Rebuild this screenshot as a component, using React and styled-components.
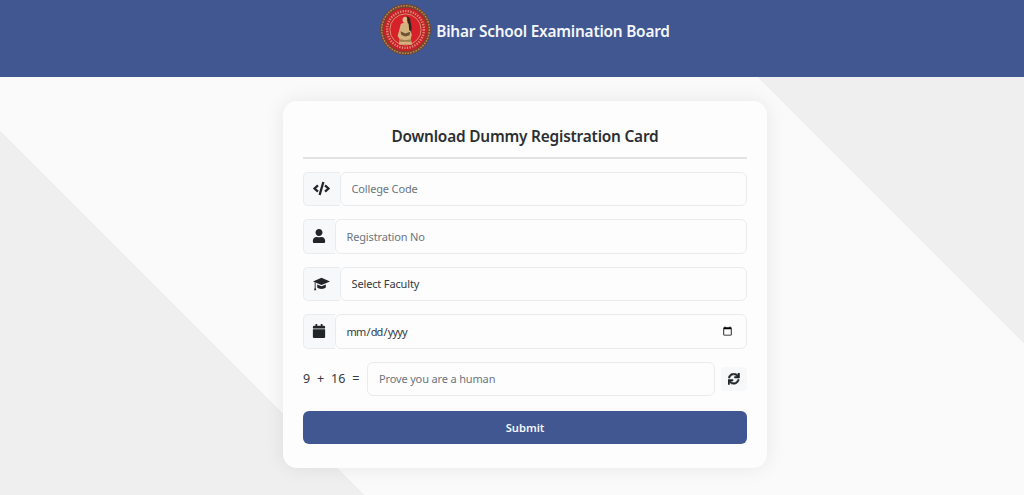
import styled, { createGlobalStyle } from "styled-components";
import { FaCode, FaUser, FaCalendar, FaSync } from "react-icons/fa";

const GlobalStyle = createGlobalStyle`
  * { box-sizing: border-box; }
  body {
    margin: 0;
    font-family: "Noto Sans", "Open Sans", sans-serif;
    color: #212529;
    background: #fafafa;
  }
  input::placeholder { color: #6c757d; opacity: 1; }
`;

const Header = styled.header`
  height: 77px;
  background: #405791;
  display: flex;
  justify-content: center;
  padding: 4px 0 0 26px;
  gap: 5px;
`;

const LogoMark = styled.svg`
  width: 51px;
  height: 51px;
  flex: none;
`;

const BoardName = styled.h1`
  margin: 0;
  height: 51px;
  line-height: 56px;
  font-size: 15.4px;
  font-weight: 600;
  letter-spacing: -0.22px;
  color: #f4f6fb;
`;

const Main = styled.main`
  height: 418px;
  padding: 24px 0 0 26px;
  display: flex;
  justify-content: center;
  background: linear-gradient(45deg, #efefef 258px, #fafafa 258px, #fafafa 831px, #efefef 831px);
`;

const Card = styled.form`
  width: 484px;
  height: 367px;
  padding: 20px;
  background: #fdfdfd;
  border-radius: 14px;
  box-shadow: 0 0 20px rgba(0, 0, 0, 0.08);
`;

const CardTitle = styled.h2`
  margin: 0 0 12.5px;
  height: 38px;
  line-height: 31px;
  text-align: center;
  font-size: 15.4px;
  font-weight: 600;
  letter-spacing: -0.2px;
  color: #2b2f33;
  border-bottom: 2px solid #e2e3e5;
`;

const Row = styled.div`
  display: flex;
  height: 34.5px;
  margin-bottom: 13px;
`;

const Addon = styled.span`
  flex: none;
  width: ${(p) => p.$width}px;
  display: flex;
  align-items: center;
  justify-content: center;
  background: #f7f8fa;
  border: 1px solid #e9ecef;
  border-right: none;
  border-radius: 5px 0 0 5px;
  font-size: ${(p) => p.$size || 15}px;
  color: #212529;
`;

const fieldStyles = `
  flex: 1;
  min-width: 0;
  height: 100%;
  padding: 0 11px;
  font-family: inherit;
  font-size: 11px;
  letter-spacing: -0.15px;
  color: #343a40;
  background: #fdfdfd;
  border: 1px solid #e9ecef;
  border-radius: 6px;
  outline: none;
`;

const Field = styled.input`
  ${fieldStyles}
`;

const DateField = styled.input`
  ${fieldStyles}
  &::-webkit-datetime-edit { letter-spacing: -0.85px; margin-left: -1px; }
`;

const Picker = styled.select`
  ${fieldStyles}
  appearance: none;
`;

const Sum = styled.span`
  flex: none;
  width: 64px;
  display: flex;
  align-items: center;
  font-size: 12.5px;
  word-spacing: 0.2px;
  color: #343a40;
  white-space: pre;
`;

const Refresh = styled.button`
  flex: none;
  align-self: center;
  width: 26px;
  height: 24px;
  margin-left: 6px;
  padding: 0;
  display: flex;
  align-items: center;
  justify-content: center;
  background: #f7f8fa;
  border: none;
  border-radius: 4px;
  font-size: 11.5px;
  color: #212529;

  svg { stroke: currentColor; stroke-width: 24; }
`;

const Submit = styled.button`
  display: block;
  width: 100%;
  height: 33px;
  margin-top: 15px;
  font-family: inherit;
  font-size: 11.2px;
  font-weight: 600;
  color: #f4f6fb;
  background: #405791;
  border: none;
  border-radius: 6px;
`;

function Logo() {
  return (
    <LogoMark viewBox="0 0 51 51">
      <circle cx="25.5" cy="25.5" r="25.5" fill="#74452c" />
      <circle cx="25.5" cy="25.5" r="23.8" fill="none" stroke="#b98a54" strokeWidth="1.5" strokeDasharray="1.6 1.2" />
      <circle cx="25.5" cy="25.5" r="21.8" fill="#c5212a" />
      <circle cx="25.5" cy="25.5" r="18.4" fill="none" stroke="#eebf9a" strokeWidth="2.4" strokeDasharray="1.3 1.3" opacity="0.65" />
      <circle cx="25.5" cy="25.5" r="15.6" fill="#d6202a" stroke="#d8ad80" strokeWidth="0.8" />
      {/* seated figure in the middle */}
      <path d="M24 18.5l-3.2 1.6-1.8 7-1.4 4.8 2 3.4-.6 5.2h13l-1.2-6 1-3.6-1.4-5-.6-5.6-2.8-1.8z" fill="#d4b27e" />
      <circle cx="25.6" cy="15.8" r="3.1" fill="#e0b98a" />
      <path d="M26 12.2c3 0 4.4 2.2 4.4 4.6l1.2 6.4-.4 4.2-2-1.2-.6-6.2-1.6-3.6c.6-1.6.2-3-1-4.2z" fill="#33241a" />
      <path d="M20.4 27.2l5 2.2 4.8-1.6-.6 3.4-4.2 1.4-4-1.6z" fill="#6b5334" />
      <path d="M20 35.2l5.6 1 5-1 .6 2.6h-11.6z" fill="#9c7a4c" />
    </LogoMark>
  );
}

function CapIcon() {
  return (
    <svg width="17" height="14" viewBox="0 0 17 14" fill="currentColor">
      <path d="M8.5 .8L17 4.4 8.5 8 0 4.4z" />
      <path d="M4.2 7.4l4.3 1.9 4.3-1.9v3.2c-1.4 1.7-7.2 1.7-8.6 0z" />
      <path d="M1.7 5.2l.9.4v5.2l.7 2.4H1l.7-2.4z" />
    </svg>
  );
}

export default function App() {
  return (
    <>
      <GlobalStyle />
      <Header>
        <Logo />
        <BoardName>Bihar School Examination Board</BoardName>
      </Header>
      <Main>
        <Card onSubmit={(e) => e.preventDefault()}>
          <CardTitle>Download Dummy Registration Card</CardTitle>
          <Row>
            <Addon $width={36.5} $size={17}><FaCode /></Addon>
            <Field placeholder="College Code" />
          </Row>
          <Row>
            <Addon $width={31.5} $size={14}><FaUser /></Addon>
            <Field placeholder="Registration No" />
          </Row>
          <Row>
            <Addon $width={36.5}><CapIcon /></Addon>
            <Picker defaultValue="">
              <option value="">Select Faculty</option>
              <option value="arts">Arts</option>
              <option value="science">Science</option>
              <option value="commerce">Commerce</option>
            </Picker>
          </Row>
          <Row>
            <Addon $width={31.5} $size={14}><FaCalendar /></Addon>
            <DateField type="date" />
          </Row>
          <Row>
            <Sum>9  +  16  =</Sum>
            <Field placeholder="Prove you are a human" />
            <Refresh type="button" aria-label="Refresh"><FaSync /></Refresh>
          </Row>
          <Submit type="submit">Submit</Submit>
        </Card>
      </Main>
    </>
  );
}
